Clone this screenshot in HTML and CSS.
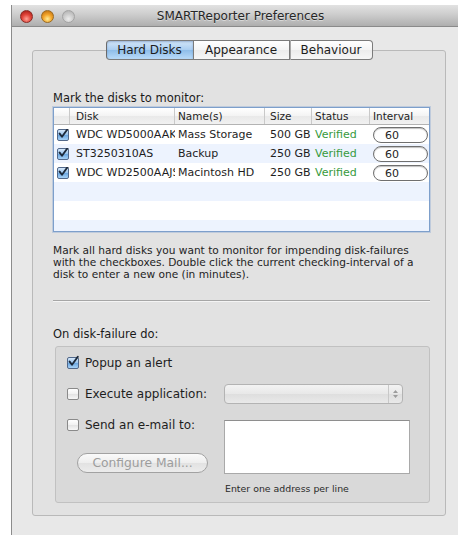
FILE: index.html
```html
<!DOCTYPE html>
<html lang="en">
<head>
<meta charset="utf-8">
<title>SMARTReporter Preferences</title>
<link rel="stylesheet" href="styles.css">
</head>
<body>
<div class="window">
  <div class="titlebar">
    <div class="lights">
      <span class="light light-close"></span>
      <span class="light light-min"></span>
      <span class="light light-zoom"></span>
    </div>
    <div class="title">SMARTReporter Preferences</div>
  </div>

  <div class="content">
    <div class="tabbox">
      <div class="tabs">
        <span class="tab tab-active">Hard Disks</span>
        <span class="tab tab-appearance">Appearance</span>
        <span class="tab tab-behaviour">Behaviour</span>
      </div>

      <div class="label label-disks">Mark the disks to monitor:</div>

      <div class="table">
        <div class="row head">
          <div class="cell c-check"></div>
          <div class="cell c-disk">Disk</div>
          <div class="cell c-name">Name(s)</div>
          <div class="cell c-size">Size</div>
          <div class="cell c-status">Status</div>
          <div class="cell c-interval">Interval</div>
        </div>
        <div class="row">
          <div class="cell c-check"><span class="check on"><svg viewBox="0 0 12 12"><path d="M2.6 5.6 L5 8.8 L10.8 0.8"/></svg></span></div>
          <div class="cell c-disk">WDC WD5000AAKS</div>
          <div class="cell c-name">Mass Storage</div>
          <div class="cell c-size">500 GB</div>
          <div class="cell c-status">Verified</div>
          <div class="cell c-interval"><span class="pill">60</span></div>
        </div>
        <div class="row alt">
          <div class="cell c-check"><span class="check on"><svg viewBox="0 0 12 12"><path d="M2.6 5.6 L5 8.8 L10.8 0.8"/></svg></span></div>
          <div class="cell c-disk">ST3250310AS</div>
          <div class="cell c-name">Backup</div>
          <div class="cell c-size">250 GB</div>
          <div class="cell c-status">Verified</div>
          <div class="cell c-interval"><span class="pill">60</span></div>
        </div>
        <div class="row">
          <div class="cell c-check"><span class="check on"><svg viewBox="0 0 12 12"><path d="M2.6 5.6 L5 8.8 L10.8 0.8"/></svg></span></div>
          <div class="cell c-disk">WDC WD2500AAJS</div>
          <div class="cell c-name">Macintosh HD</div>
          <div class="cell c-size">250 GB</div>
          <div class="cell c-status">Verified</div>
          <div class="cell c-interval"><span class="pill">60</span></div>
        </div>
        <div class="row alt empty"></div>
        <div class="row empty"></div>
        <div class="row alt empty"></div>
      </div>

      <p class="hint">Mark all hard disks you want to monitor for impending disk-failures with the checkboxes. Double click the current checking-interval of a disk to enter a new one (in minutes).</p>

      <div class="separator"></div>

      <div class="label label-failure">On disk-failure do:</div>

      <div class="group">
        <div class="option opt-alert">
          <span class="check on"><svg viewBox="0 0 12 12"><path d="M2.6 5.6 L5 8.8 L10.8 0.8"/></svg></span>
          <span>Popup an alert</span>
        </div>

        <div class="option-row opt-exec">
          <div class="option">
            <span class="check"></span>
            <span>Execute application:</span>
          </div>
          <div class="popup">
            <span class="popup-arrows">
              <svg viewBox="0 0 7 12" width="7" height="12"><path d="M1 5 L3.5 2 L6 5 Z M1 7 L3.5 10 L6 7 Z"/></svg>
            </span>
          </div>
        </div>

        <div class="option-row opt-mail">
          <div class="mail-left">
            <div class="option">
              <span class="check"></span>
              <span>Send an e-mail to:</span>
            </div>
            <span class="button">Configure Mail...</span>
          </div>
          <div class="mail-right">
            <div class="textarea"></div>
            <div class="note">Enter one address per line</div>
          </div>
        </div>
      </div>
    </div>
  </div>
</div>
</body>
</html>
```

FILE: styles.css
```css
html, body {
  margin: 0;
  padding: 0;
}

body {
  background: #ffffff;
  width: 458px;
  height: 535px;
  overflow: hidden;
  font-family: "DejaVu Sans", "Noto Sans", sans-serif;
  color: #1e1e1e;
}

/* window frame, its right side runs past the visible area */
.window {
  margin: 5px 0 0 11px;
  width: 458px;
  height: 530px;
  background: #e8e8e8;
  border-left: 1px solid #8c8c8c;
  box-sizing: border-box;
}

.titlebar {
  height: 22px;
  display: flex;
  align-items: center;
  background: linear-gradient(#e2e2e2, #cdcdcd 45%, #aeaeae);
  border-bottom: 1px solid #8a8a8a;
  box-sizing: border-box;
  padding-left: 8px;
}

.lights {
  display: flex;
  gap: 8px;
  width: 0;
  margin-top: 1px;
}

.light {
  flex: none;
  width: 13px;
  height: 13px;
  border-radius: 50%;
  box-sizing: border-box;
}

.light-close {
  background: radial-gradient(circle at 50% 72%, #ffa195 0, #e2463b 45%, #9c140e 100%);
  border: 1px solid #8a2a24;
}

.light-min {
  background: radial-gradient(circle at 50% 72%, #ffec96 0, #f3a52a 45%, #b4650c 100%);
  border: 1px solid #9a6a20;
}

.light-zoom {
  background: radial-gradient(circle at 50% 72%, #ececec 0, #cbcbcb 50%, #ababab 100%);
  border: 1px solid #a3a3a3;
}

.title {
  flex: 1;
  text-align: center;
  font-size: 12px;
  color: #262626;
  text-shadow: 0 1px 0 rgba(255, 255, 255, 0.45);
  margin-left: -8px;
}

.content {
  padding: 23px 0 0 20px;
}

/* tab view box */
.tabbox {
  width: 414px;
  height: 466px;
  box-sizing: border-box;
  border: 1px solid #b9b9b9;
  border-radius: 3px;
  background: #e2e2e2;
  padding: 0 16px 0 20px;
}

.tabs {
  display: flex;
  justify-content: center;
  margin: -11px 0 0 -20px;
  width: 412px;
  height: 20px;
}

.tab {
  display: flex;
  align-items: center;
  justify-content: center;
  height: 20px;
  box-sizing: border-box;
  font-size: 12px;
  color: #1c1c1c;
  background: linear-gradient(#ffffff, #f4f4f4 50%, #ececec 51%, #f6f6f6);
  border: 1px solid #7b7b7b;
  border-left-color: #a9a9a9;
}

.tab-active {
  width: 88px;
  border-left-color: #6a6a6a;
  border-radius: 4px 0 0 4px;
  background: linear-gradient(#d4e6f8, #a9cdf1 50%, #8ebde9 51%, #b9dbf9);
  box-shadow: inset 0 1px 2px rgba(40, 80, 140, 0.35);
}

.tab-appearance {
  width: 96px;
  border-left: none;
}

.tab-behaviour {
  width: 83px;
  border-radius: 0 4px 4px 0;
}

.label {
  font-size: 11.5px;
  line-height: 14px;
  color: #1a1a1a;
}

.label-disks {
  margin-top: 31px;
}

/* disk table */
.table {
  margin-top: 2px;
  width: 377px;
  height: 125px;
  box-sizing: border-box;
  border: 1px solid #7d9fcb;
  box-shadow: 0 0 0 1px rgba(125, 160, 210, 0.35);
  background: #ffffff;
  overflow: hidden;
}

.row {
  display: flex;
  height: 19px;
  align-items: center;
  font-size: 11px;
}

.row.alt {
  background: #edf3fe;
}

.row.head {
  height: 17px;
  background: linear-gradient(#ffffff, #f3f3f3 50%, #e9e9e9 51%, #f1f1f1);
  border-bottom: 1px solid #b3b3b3;
  box-sizing: border-box;
  font-size: 10.5px;
}

.row.head .cell {
  height: 100%;
  display: flex;
  align-items: center;
  border-right: 1px solid #c9c9c9;
}

.row.head .c-interval {
  border-right: none;
}

.cell {
  box-sizing: border-box;
  white-space: nowrap;
  overflow: hidden;
}

.c-check {
  width: 16px;
  padding-left: 3px;
  display: flex;
  align-items: center;
}

.c-disk {
  width: 105px;
  padding-left: 6px;
}

.c-name {
  width: 90px;
  padding-left: 3px;
}

.c-size {
  width: 47px;
  padding-left: 5px;
}

.c-status {
  width: 58px;
  padding-left: 3px;
  color: #369a3c;
}

.row.head .c-status {
  color: #1e1e1e;
}

.c-interval {
  width: 59px;
  padding-left: 3px;
}

.pill {
  display: block;
  width: 55px;
  height: 16px;
  box-sizing: border-box;
  border: 1px solid #6f6f6f;
  border-radius: 8px;
  background: #ffffff;
  box-shadow: inset 0 1px 1px rgba(0, 0, 0, 0.25);
  padding-left: 11px;
  line-height: 15px;
  font-size: 11px;
}

/* checkboxes */
.check {
  flex: none;
  display: inline-block;
  width: 12px;
  height: 12px;
  box-sizing: border-box;
  border: 1px solid #8a8a8a;
  border-radius: 2px;
  background: linear-gradient(#ffffff, #f1f1f1 50%, #e3e3e3 51%, #f7f7f7);
  position: relative;
}

.check.on {
  border-color: #51688a;
  background: linear-gradient(#d6e8fa, #94c1ec 50%, #6aa6e0 51%, #a6d1f6);
}

.check svg {
  position: absolute;
  left: -1px;
  top: -2px;
  width: 12px;
  height: 12px;
  overflow: visible;
}

.check svg path {
  fill: none;
  stroke: #1d2a3b;
  stroke-width: 1.9;
  stroke-linecap: round;
  stroke-linejoin: round;
}

.hint {
  margin: 12px 0 0;
  font-size: 10.6px;
  line-height: 12px;
  color: #1e1e1e;
  width: 377px;
}

.separator {
  margin-top: 20px;
  width: 377px;
  height: 1px;
  background: #a6a6a6;
  border-bottom: 1px solid #f4f4f4;
}

.label-failure {
  margin-top: 25px;
}

/* action group box */
.group {
  margin: 5px 0 0 2px;
  width: 375px;
  height: 157px;
  box-sizing: border-box;
  border: 1px solid #c1c1c1;
  border-radius: 3px;
  background: #d9d9d9;
  padding: 8px 0 0 11px;
  font-size: 11px;
}

.option {
  display: flex;
  align-items: center;
  gap: 6px;
  height: 16px;
  line-height: 16px;
  font-size: 12px;
}

.option-row {
  display: flex;
}

.opt-exec {
  margin-top: 13px;
  align-items: center;
  height: 20px;
}

.opt-exec .option,
.mail-left {
  width: 157px;
}

.popup {
  width: 179px;
  height: 20px;
  box-sizing: border-box;
  border: 1px solid #b3b3b3;
  border-radius: 4px;
  background: linear-gradient(#f3f3f3, #e8e8e8 50%, #dedede 51%, #e9e9e9);
  display: flex;
  justify-content: flex-end;
}

.popup-arrows {
  width: 13px;
  border-left: 1px solid #c8c8c8;
  display: flex;
  align-items: center;
  justify-content: center;
}

.popup-arrows path {
  fill: #9c9c9c;
}

.opt-mail {
  margin-top: 14px;
}

.mail-left {
  display: flex;
  flex-direction: column;
}

.mail-left .option {
  height: 14px;
}

.button {
  margin: 21px 0 0 10px;
  width: 131px;
  height: 20px;
  box-sizing: border-box;
  border: 1px solid #a2a2a2;
  border-radius: 10px;
  background: linear-gradient(#fafafa, #eeeeee 50%, #e2e2e2 51%, #ececec);
  color: #9d9d9d;
  font-size: 12.3px;
  display: flex;
  align-items: center;
  justify-content: center;
}

.mail-right {
  margin-top: 2px;
}

.textarea {
  width: 186px;
  height: 54px;
  box-sizing: border-box;
  background: #ffffff;
  border: 1px solid #a9a9a9;
  border-top-color: #8e8e8e;
}

.note {
  margin: 9px 0 0 1px;
  font-size: 9.4px;
  line-height: 12px;
  color: #2a2a2a;
}
```
